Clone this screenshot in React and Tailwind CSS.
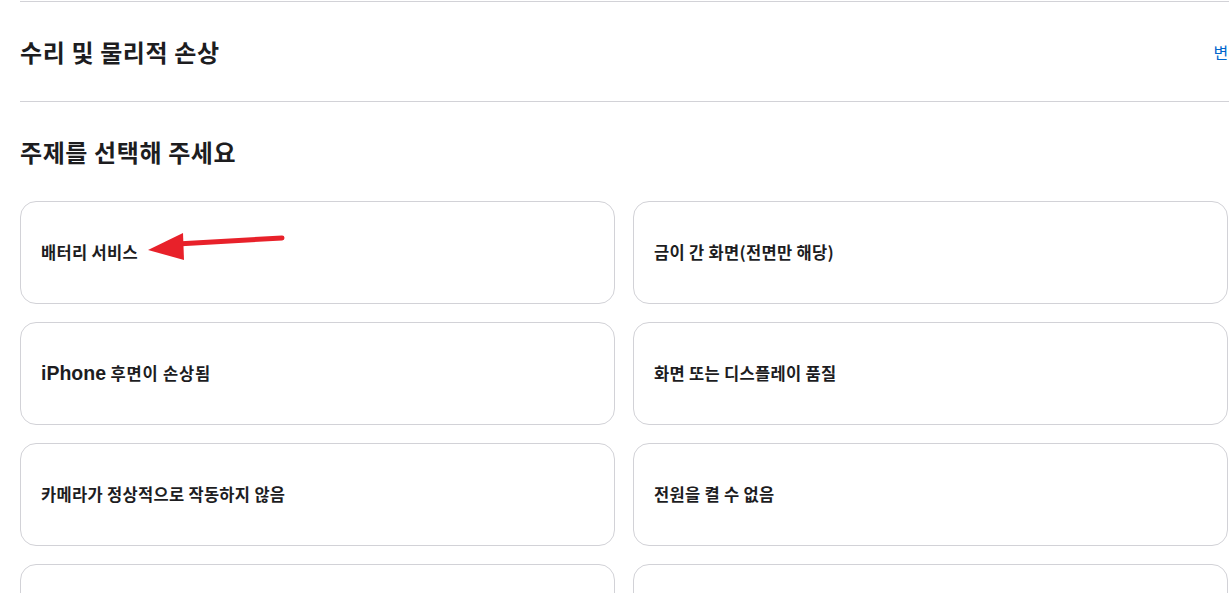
const topics = [
  '배터리 서비스',
  '금이 간 화면(전면만 해당)',
  'iPhone 후면이 손상됨',
  '화면 또는 디스플레이 품질',
  '카메라가 정상적으로 작동하지 않음',
  '전원을 켤 수 없음',
  '',
  '',
];

function TopicLabel({ text }) {
  if (text.startsWith('iPhone')) {
    return (
      <span>
        <span className="text-[19.5px] tracking-normal font-['Liberation_Sans',sans-serif]">iPhone</span>
        <span className="tracking-[0.8px]">{text.slice(6)}</span>
      </span>
    );
  }
  return <span>{text}</span>;
}

export default function App() {
  return (
    <div
      className="w-[1229px] h-[593px] overflow-hidden bg-white text-[#1d1d1f]"
      style={{ fontFamily: '"Noto Sans CJK KR", "Liberation Sans", sans-serif' }}
    >
      <div className="pl-5 pt-px">
        {/* Section header */}
        <div className="border-t border-b border-[#d2d2d7] w-[1260px]">
          <div className="flex items-center justify-between h-[99px] w-[1223px]">
            <h2 className="text-[24px] font-bold tracking-[0.6px]">수리 및 물리적 손상</h2>
            <a className="text-[16px] text-[#0066cc]">변경</a>
          </div>
        </div>

        <h3 className="text-[24px] font-bold tracking-[0.6px] h-[99px] flex items-center">
          주제를 선택해 주세요
        </h3>

        {/* Topic grid */}
        <div className="relative grid grid-cols-[595px_595px] gap-x-[18px] gap-y-[18px]">
          {topics.map((t, i) => (
            <div
              key={i}
              className="h-[103px] rounded-[16px] border border-[#d2d2d7] bg-white flex items-center px-5 text-[16.5px] font-bold tracking-[0.3px]"
            >
              <TopicLabel text={t} />
            </div>
          ))}

          {/* annotation arrow */}
          <svg
            className="absolute left-[120px] top-[28px] pointer-events-none"
            width="150"
            height="40"
            viewBox="0 0 150 40"
          >
            <line x1="142" y1="9" x2="37" y2="15" stroke="#e8212a" strokeWidth="5" strokeLinecap="round" />
            <polygon points="8,21 43,4 44,31" fill="#e8212a" />
          </svg>
        </div>
      </div>
    </div>
  );
}
